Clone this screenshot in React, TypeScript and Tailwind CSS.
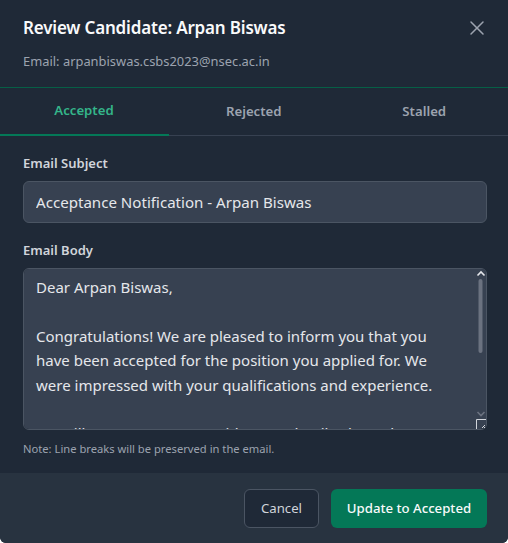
import { X } from "lucide-react";

const BODY = `Dear Arpan Biswas,

Congratulations! We are pleased to inform you that you have been accepted for the position you applied for. We were impressed with your qualifications and experience.

We will contact you soon with more details about the next steps.

Best regards,
The Hiring Team`;

export default function App() {
  return (
    <div className="flex h-[543px] w-[508px] flex-col overflow-hidden rounded-b-md bg-[#1f2937] font-['Noto_Sans',sans-serif]">
      <div className="relative h-[88px] shrink-0 border-b border-[#065f46] pt-[17px] pr-[21px] pl-[23px]">
        <h2 className="text-[17px] leading-[22px] font-semibold tracking-[-0.18px] text-[#f9fafb]">Review Candidate: Arpan Biswas</h2>
        <p className="mt-[14px] text-[12.9px] leading-[16px] text-[#9ca3af]">Email: arpanbiswas.csbs2023@nsec.ac.in</p>
        <button className="absolute top-[16px] right-[19px] text-[#9ca3af]">
          <X className="h-6 w-6" strokeWidth={1.5} />
        </button>
      </div>

      <div className="flex h-[48px] shrink-0 border-b border-[#374151]">
        <div className="-mb-px w-[169px] shrink-0 border-b-2 border-[#047857] pr-px pb-[2px] text-center text-[13.2px] leading-[45px] font-semibold text-[#34b58a]">Accepted</div>
        <div className="flex-1 pl-px text-center text-[13.2px] leading-[47px] font-semibold text-[#9ca3af]">Rejected</div>
        <div className="flex-1 pl-[3px] text-center text-[13.2px] leading-[47px] font-semibold text-[#9ca3af]">Stalled</div>
      </div>

      <div className="flex-1 pt-[19px] pr-[21px] pl-[23px]">
        <label className="block text-[13px] leading-[16px] font-semibold text-[#d1d5db]">Email Subject</label>
        <input
          readOnly
          value="Acceptance Notification - Arpan Biswas"
          className="mt-[10px] block h-[42px] w-full rounded-md border border-[#4b5563] bg-[#374151] px-3 text-[15.1px] text-[#e5e7eb] outline-none"
        />
        <label className="mt-[19px] block text-[13px] leading-[16px] font-semibold text-[#d1d5db]">Email Body</label>
        <div className="relative mt-[10px]">
          <textarea
            readOnly
            value={BODY}
            className="block h-[162px] w-full resize-none overflow-y-scroll rounded-md border border-[#4b5563] bg-[#374151] pt-[6.4px] pr-[23px] pb-2 pl-3 text-[15px] leading-[24.3px] text-[#e5e7eb] outline-none [scrollbar-width:none]"
          />
          {/* scrollbar + resize grip */}
          <svg className="pointer-events-none absolute top-0 right-0 h-[162px] w-[12px]" viewBox="0 0 12 162" fill="none">
            <path d="M2.5 7.5 L6 4 L9.5 7.5" stroke="#e5e7eb" strokeWidth="1.6" />
            <rect x="3.5" y="11" width="4" height="74" rx="2" fill="#6b7280" />
            <path d="M2.5 144 L6 147.5 L9.5 144" stroke="#6b7280" strokeWidth="1.6" />
            <path d="M1.5 161 V151.5 H11" stroke="#d1d5db" strokeWidth="1" />
            <path d="M7 160 L10 157 M9 160 L10 159" stroke="#d1d5db" strokeWidth="1" />
          </svg>
        </div>
        <p className="mt-[12px] text-[11.2px] leading-[14px] text-[#9ca3af]">Note: Line breaks will be preserved in the email.</p>
      </div>

      <div className="flex h-[70px] shrink-0 items-start justify-end gap-3 bg-[#283340] px-[21px] pt-[16px]">
        <button className="h-[39px] w-[75px] rounded-md border border-[#4b5563] bg-[#1f2937] pt-px text-[13.2px] font-normal text-[#d1d5db]">Cancel</button>
        <button className="h-[39px] w-[156px] rounded-md bg-[#047857] pt-px text-[13.2px] font-medium text-[#f9fafb]">Update to Accepted</button>
      </div>
    </div>
  );
}
